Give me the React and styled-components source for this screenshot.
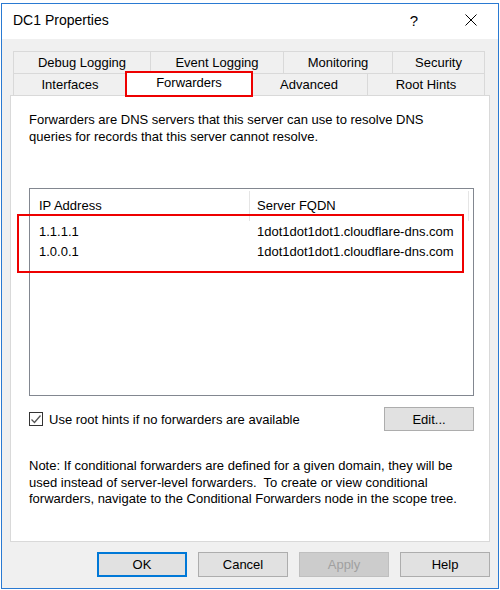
import React from 'react';
import styled, { createGlobalStyle } from 'styled-components';

const GlobalStyle = createGlobalStyle`
  html, body {
    margin: 0;
    padding: 0;
    background: #ffffff;
  }
  body {
    font-family: "Liberation Sans", Arial, sans-serif;
    font-size: 13px;
    color: #000000;
  }
  * {
    box-sizing: border-box;
  }
`;

const Window = styled.div`
  margin: 3px 0 0 1px;
  width: 498px;
  height: 586px;
  border: 1px solid #2a7ad2;
  background: #f0f0f0;
  display: flex;
  flex-direction: column;
`;

const TitleBar = styled.div`
  height: 35px;
  background: #ffffff;
  display: flex;
  align-items: center;
  padding: 0 4px 0 11px;
`;

const Title = styled.div`
  flex: 1;
  font-size: 14px;
  padding-bottom: 3px;
`;

const TitleButton = styled.div`
  width: ${(p) => p.$w}px;
  height: 100%;
  display: flex;
  align-items: center;
  justify-content: center;
  font-size: 15px;
  padding-bottom: 3px;
`;

const Body = styled.div`
  flex: 1;
  padding: 12px 8px 0 8px;
  display: flex;
  flex-direction: column;
`;

const Tabs = styled.div`
  margin: 0 3px;
  display: flex;
  flex-direction: column;
`;

const TabRow = styled.div`
  display: flex;
  height: 22px;
`;

const Tab = styled.div`
  position: relative;
  width: ${(p) => p.$w}px;
  height: 100%;
  border: 1px solid #d9d9d9;
  border-left-width: ${(p) => (p.$first ? 1 : 0)}px;
  border-bottom: none;
  background: #f0f0f0;
  display: flex;
  align-items: center;
  justify-content: center;
  padding-bottom: 1px;
`;

const ActiveTab = styled.div`
  position: relative;
  z-index: 2;
  width: ${(p) => p.$w}px;
  height: 24px;
  margin: -1px -1px -2px -1px;
  background: #ffffff;
  border: 1px solid #d9d9d9;
  border-bottom: none;
  display: flex;
  align-items: center;
  justify-content: center;
  padding-bottom: 4px;
  outline: 2px solid #ee0000;
  outline-offset: -1px;
`;

const Panel = styled.div`
  position: relative;
  height: 447px;
  background: #ffffff;
  border: 1px solid #d9d9d9;
  padding: 15px 15px 0 18px;
  display: flex;
  flex-direction: column;
`;

const Description = styled.p`
  margin: 0;
  line-height: 17px;
`;

const ListBox = styled.div`
  position: relative;
  margin-top: 43px;
  height: 208px;
  border: 1px solid #828790;
`;

const ListGrid = styled.div`
  display: grid;
  grid-template-columns: 220px 219px 1fr;
`;

const HeaderCell = styled.div`
  height: 30px;
  display: flex;
  align-items: center;
  padding-left: ${(p) => p.$pad}px;
  padding-bottom: 1px;
  border-right: ${(p) => (p.$sep ? '1px solid #e5e5e5' : 'none')};
  margin: 2px 0 0 0;
`;

const Cell = styled.div`
  height: 20px;
  display: flex;
  align-items: center;
  padding-left: ${(p) => p.$pad}px;
  white-space: nowrap;
`;

const RowHighlight = styled.div`
  position: absolute;
  left: -13px;
  top: 25px;
  width: 447px;
  height: 59px;
  border: 2px solid #ee0000;
`;

const OptionsRow = styled.div`
  margin-top: 11px;
  display: flex;
  align-items: center;
  justify-content: space-between;
`;

const CheckLabel = styled.label`
  display: flex;
  align-items: center;
  gap: 6px;
`;

const CheckBox = styled.span`
  width: 14px;
  height: 14px;
  border: 1px solid #333333;
  background: #ffffff;
  display: flex;
  align-items: center;
  justify-content: center;
`;

const Button = styled.button`
  width: ${(p) => p.$w || 90}px;
  height: ${(p) => p.$h || 25}px;
  font-family: "Liberation Sans", Arial, sans-serif;
  font-size: 13px;
  color: ${(p) => (p.$disabled ? '#a0a0a0' : '#000000')};
  background: ${(p) => (p.$disabled ? '#cccccc' : '#e1e1e1')};
  border: ${(p) =>
    p.$default ? '2px solid #0078d7' : p.$disabled ? '1px solid #bfbfbf' : '1px solid #adadad'};
  padding: 0;
  margin: 0;
`;

const Note = styled.p`
  margin: 27px 0 0 0;
  line-height: 16.5px;
`;

const ButtonBar = styled.div`
  margin-top: 10px;
  display: flex;
  justify-content: flex-end;
  gap: 11px;
  padding-right: 0;
`;

const tabRow1 = [
  { label: 'Debug Logging', w: 138 },
  { label: 'Event Logging', w: 133 },
  { label: 'Monitoring', w: 109 },
  { label: 'Security', w: 92 },
];

const tabRow2 = [
  { label: 'Interfaces', w: 114 },
  { label: 'Forwarders', w: 124, active: true },
  { label: 'Advanced', w: 117 },
  { label: 'Root Hints', w: 117 },
];

const forwarders = [
  { ip: '1.1.1.1', fqdn: '1dot1dot1dot1.cloudflare-dns.com' },
  { ip: '1.0.0.1', fqdn: '1dot1dot1dot1.cloudflare-dns.com' },
];

const CloseIcon = () => (
  <svg width="12" height="12" viewBox="0 0 12 12">
    <path d="M0.5 0.5 L11.5 11.5 M11.5 0.5 L0.5 11.5" stroke="#000" strokeWidth="1" fill="none" />
  </svg>
);

const CheckIcon = () => (
  <svg width="12" height="12" viewBox="0 0 12 12">
    <path d="M1.5 6.5 L4.5 9.5 L10.5 2.5" stroke="#555" strokeWidth="1.3" fill="none" />
  </svg>
);

const App = () => {
  return (
    <>
      <GlobalStyle />
      <Window>
        <TitleBar>
          <Title>DC1 Properties</Title>
          <TitleButton $w={68}>?</TitleButton>
          <TitleButton $w={46}>
            <CloseIcon />
          </TitleButton>
        </TitleBar>
        <Body>
          <Tabs>
            <TabRow>
              {tabRow1.map((t, i) => (
                <Tab key={t.label} $w={t.w} $first={i === 0}>
                  {t.label}
                </Tab>
              ))}
            </TabRow>
            <TabRow>
              {tabRow2.map((t, i) =>
                t.active ? (
                  <ActiveTab key={t.label} $w={t.w + 2}>
                    {t.label}
                  </ActiveTab>
                ) : (
                  <Tab key={t.label} $w={t.w} $first={i === 0}>
                    {t.label}
                  </Tab>
                )
              )}
            </TabRow>
          </Tabs>
          <Panel>
            <Description>
              Forwarders are DNS servers that this server can use to resolve DNS
              <br />
              queries for records that this server cannot resolve.
            </Description>
            <ListBox>
              <ListGrid>
                <HeaderCell $pad={9} $sep>IP Address</HeaderCell>
                <HeaderCell $pad={7} $sep>Server FQDN</HeaderCell>
                <HeaderCell $pad={0} />
                {forwarders.map((f) => (
                  <React.Fragment key={f.ip}>
                    <Cell $pad={9}>{f.ip}</Cell>
                    <Cell $pad={7}>{f.fqdn}</Cell>
                    <Cell $pad={0} />
                  </React.Fragment>
                ))}
              </ListGrid>
              <RowHighlight />
            </ListBox>
            <OptionsRow>
              <CheckLabel>
                <CheckBox>
                  <CheckIcon />
                </CheckBox>
                Use root hints if no forwarders are available
              </CheckLabel>
              <Button $w={90} $h={24}>Edit...</Button>
            </OptionsRow>
            <Note>
              Note: If conditional forwarders are defined for a given domain, they will be
              <br />
              used instead of server-level forwarders.&nbsp; To create or view conditional
              <br />
              forwarders, navigate to the Conditional Forwarders node in the scope tree.
            </Note>
          </Panel>
          <ButtonBar>
            <Button $default>OK</Button>
            <Button>Cancel</Button>
            <Button $disabled>Apply</Button>
            <Button>Help</Button>
          </ButtonBar>
        </Body>
      </Window>
    </>
  );
};

export default App;
